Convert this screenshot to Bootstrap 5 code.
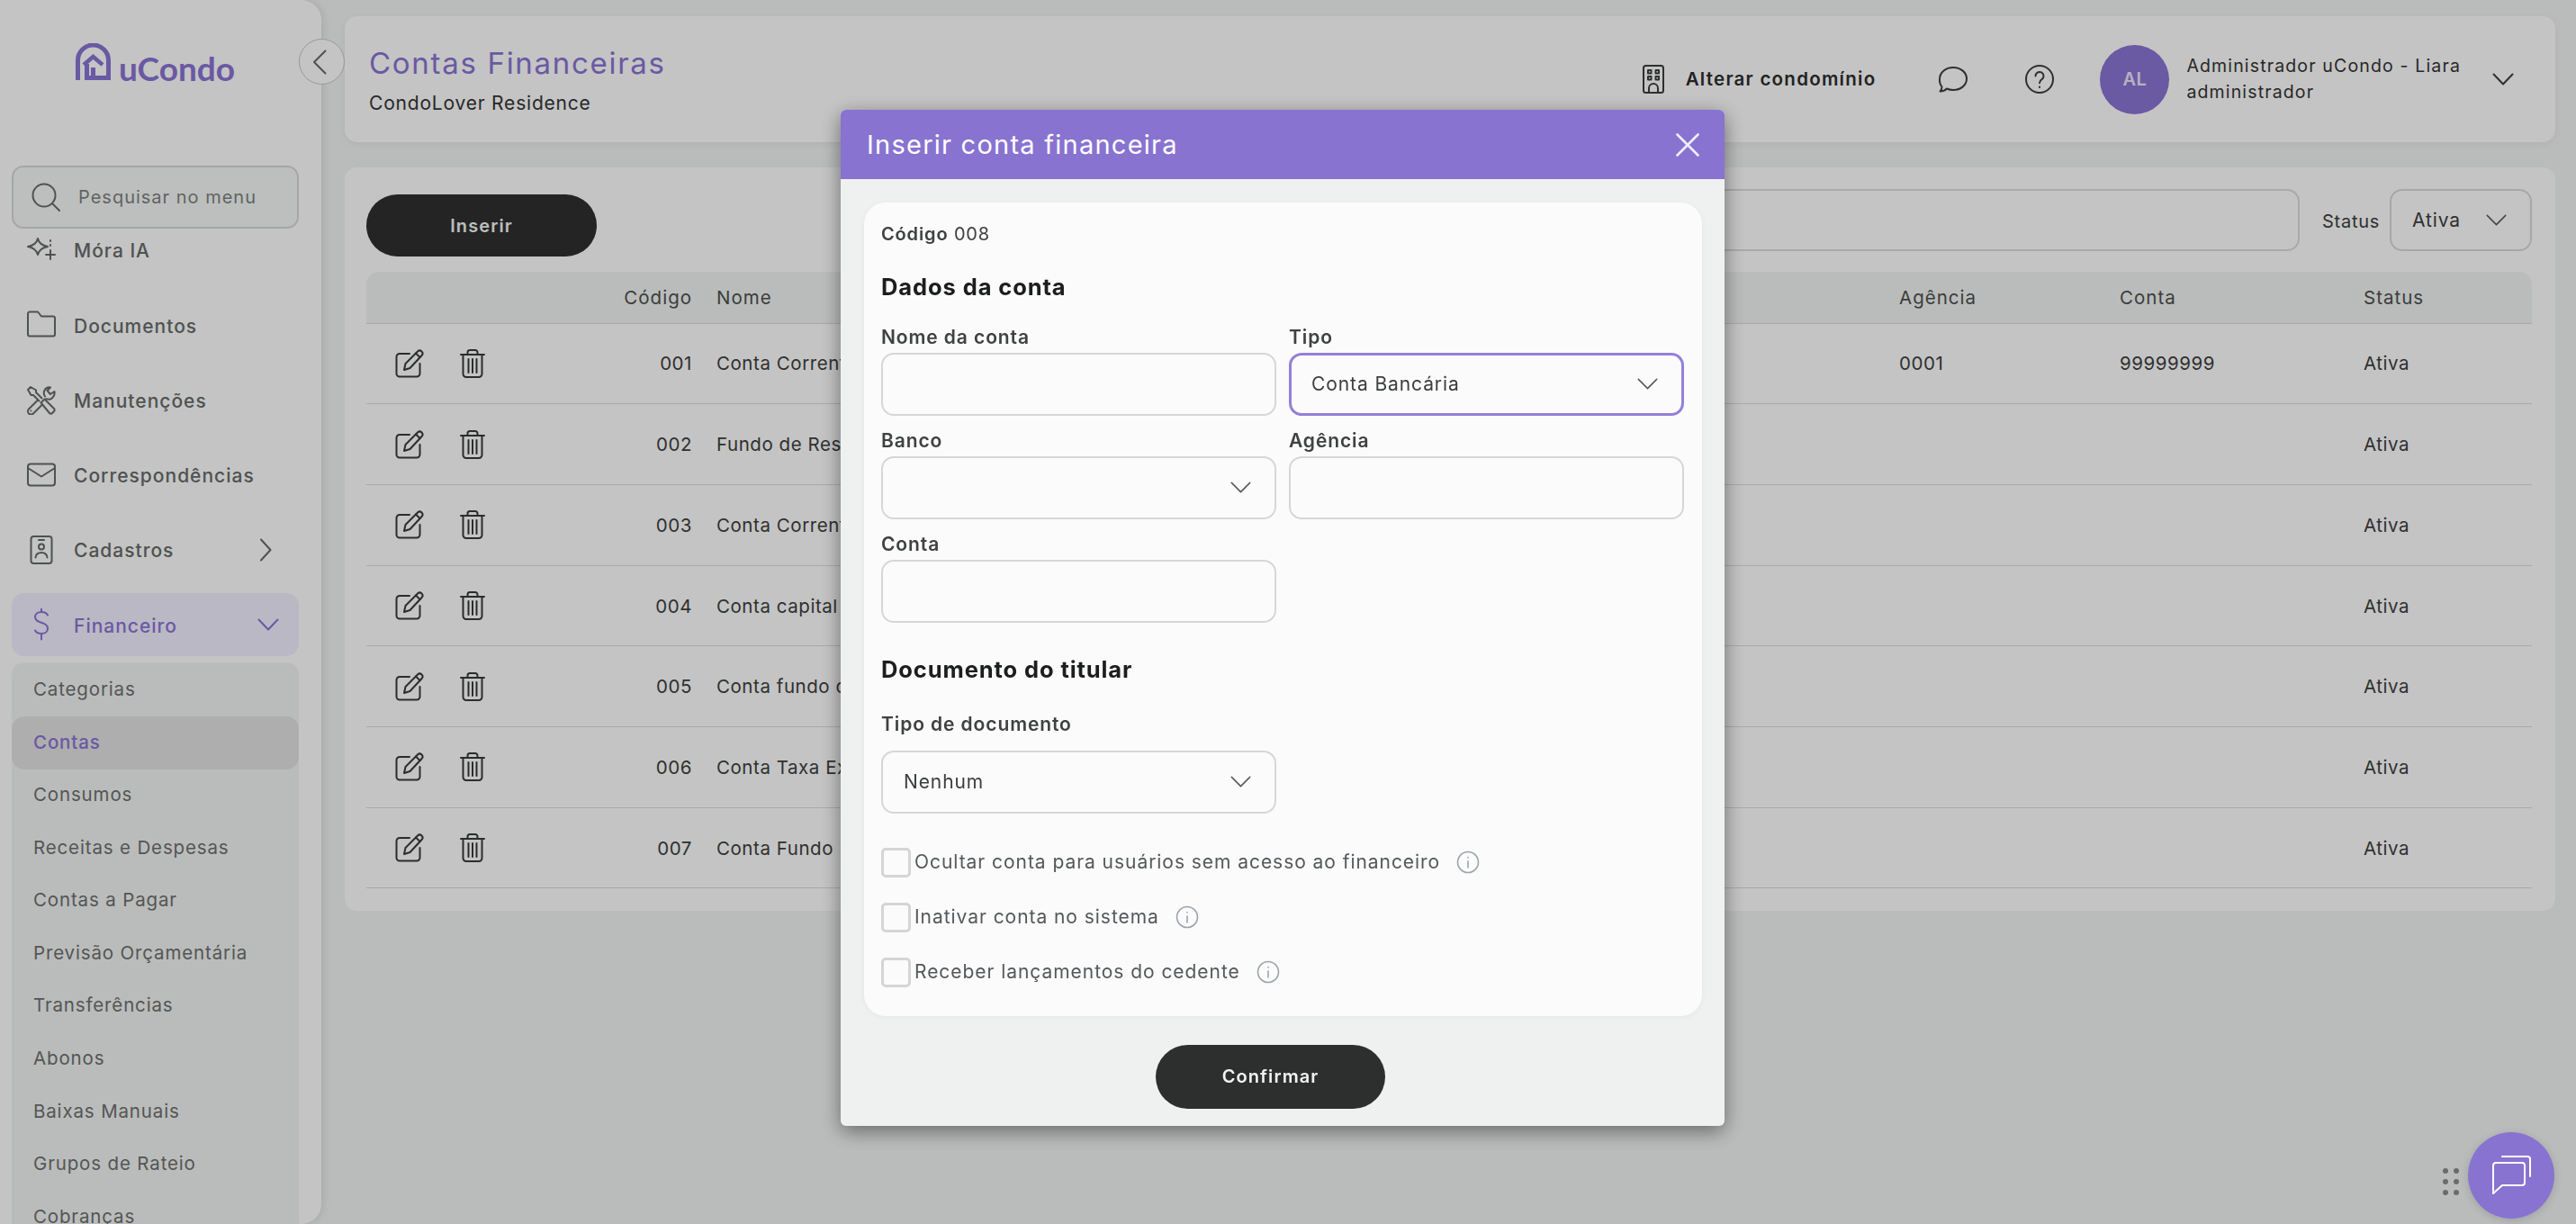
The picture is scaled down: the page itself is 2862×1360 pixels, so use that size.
<!doctype html>
<html lang="pt-BR">
<head>
<meta charset="UTF-8" />
<meta name="viewport" content="width=device-width, initial-scale=1.0" />
<title>Contas Financeiras - uCondo</title>
<link href="https://cdn.jsdelivr.net/npm/bootstrap@5.3.0/dist/css/bootstrap.min.css" rel="stylesheet" />
<style>
    :root { --roxo: #8873d1; --fundo: #eff1f0; --cartao: #fbfbfb; --escuro: #2d2f2e; }
    html, body { height: 100%; overflow: hidden; }
    body { font-family: Inter, "Liberation Sans", sans-serif; font-size: 20px; letter-spacing: .55px; background: var(--fundo); color: #3b3e3d; }
    .ico { fill: none; stroke: currentColor; stroke-width: 2; stroke-linecap: round; stroke-linejoin: round; flex: none; }

    /* menu lateral */
    .side-menu { width: 357px; height: 100vh; flex: none; background: var(--cartao); border-radius: 0 22px 22px 0; box-shadow: 2px 0 10px rgba(0,0,0,.1); position: relative; z-index: 2; }
    .side-scroll { height: 100%; overflow: hidden; border-radius: 0 22px 22px 0; }
    .side-logo { height: 184px; padding: 48px 0 0 84px; color: var(--roxo); }
    .side-logo span { font-family: Lato, sans-serif; font-weight: 700; font-size: 37px; letter-spacing: 0; line-height: 1; margin-left: 9px; margin-top: 9px; }
    .side-toggle { position: absolute; left: 332px; top: 43px; width: 51px; height: 51px; border-radius: 50%; background: var(--cartao); border: 1px solid #c4c4c4; color: #656968; padding: 0 6px 0 0; }
    .side-search { height: 70px; margin: 0 25px 0 13px; padding-left: 20px; background: #f3f5f4; border: 2px solid #d4d7d5; border-radius: 13px; position: relative; z-index: 1; color: #656968; }
    .side-search input { border: 0; background: transparent; outline: 0; width: 230px; margin-left: 18px; font-size: 20px; letter-spacing: 1px; color: #656968; }
    .side-search input::placeholder { color: #7c807e; opacity: 1; }
    .side-list { margin: -11px 25px 0 13px; padding: 0; list-style: none; }
    .side-item { height: 70px; margin-bottom: 13.3px; padding-left: 17px; padding-right: 22px; border-radius: 14px; color: #656968; font-size: 21px; font-weight: 500; letter-spacing: 1px; }
    .side-item .txt { margin-left: 20px; padding-top: 2px; flex-grow: 1; }
    .side-item.open { background: #efecfc; color: var(--roxo); margin-bottom: 7px; }
    .sub-list { background: var(--fundo); border-radius: 14px; padding: 1px 0 0; font-size: 20.5px; letter-spacing: .85px; color: #6c6e6d; margin-bottom: 0; list-style: none; }
    .sub-list li { height: 58.6px; padding: 0 0 1px 24px; display: flex; align-items: center; border-radius: 14px; }
    .sub-list li.active { background: #dfdfdf; color: var(--roxo); font-weight: 500; }

    /* area principal */
    .main-area { flex-grow: 1; min-width: 0; padding: 18px 23px 0 26px; }
    .top-card { height: 140px; background: var(--cartao); border-radius: 14px; padding: 0 46px 0 27px; margin-bottom: 28px; box-shadow: 0 2px 8px rgba(0,0,0,.06); }
    .top-title { color: var(--roxo); font-size: 33px; letter-spacing: 1.7px; line-height: 44px; margin-top: 1px; }
    .top-sub { font-size: 21px; letter-spacing: .8px; line-height: 30px; margin-top: 8px; color: #333; }
    .top-change { font-weight: 600; color: #2b2d2d; letter-spacing: 1.25px; font-size: 20.5px; }
    .top-avatar { width: 77px; height: 77px; border-radius: 50%; background: var(--roxo); color: #e8e4f6; font-weight: 600; }
    .top-user { font-size: 19.5px; line-height: 29px; margin-left: 19px; margin-right: 35px; color: #333; letter-spacing: 1.15px; }
    .list-card { height: 826px; background: var(--cartao); border-radius: 14px; padding: 24px 26px 0 24px; }
    .btn-dark-pill { background: var(--escuro); color: #f2f2f2; border: 0; border-radius: 36px; font-weight: 600; font-size: 20px; letter-spacing: 1.1px; }
    .btn-insert { width: 256px; height: 69px; margin-top: 6px; flex: none; }
    .filter-input.form-control { height: 69px; border: 2px solid #d9d9d9; border-radius: 14px; background: var(--cartao); margin-left: 340px; }
    .filter-label { width: 100px; padding-left: 25px; flex: none; font-size: 20px; letter-spacing: .75px; }
    .filter-select.form-select { width: 158px; flex: none; height: 69px; margin-left: 0; padding-left: 23px; }
    .form-select { background-image: url("data:image/svg+xml,%3csvg xmlns='http://www.w3.org/2000/svg' viewBox='0 0 24 14'%3e%3cpath fill='none' stroke='%23555' stroke-width='1.6' stroke-linecap='round' stroke-linejoin='round' d='M1 1.5l11 11 11-11'/%3e%3c/svg%3e"); background-size: 23px 13px; background-position: right 26px center; }

    .contas-table { table-layout: fixed; margin: 17px 0 0; width: 2406px; }
    .contas-table th, .contas-table td { padding: 2px 13.5px 0; vertical-align: middle; border-bottom: 1px solid #d9d9d9; background: transparent; color: #3b3e3d; font-weight: 400; font-size: 20.5px; box-shadow: none; }
    .contas-table thead tr { height: 57px; }
    .contas-table th { background: var(--fundo); color: #4c4f4e; letter-spacing: 1px; }
    .contas-table th:first-child { border-top-left-radius: 14px; }
    .contas-table th:last-child { border-top-right-radius: 14px; }
    .contas-table tbody tr { height: 89.7px; }
    .contas-table td.acoes { padding-left: 32px; color: #373a39; }
    .contas-table td.acoes > div { margin-top: -2px; gap: 40px; }

    /* modal */
    .modal { --bs-modal-width: 982px; }
    .modal-backdrop { --bs-backdrop-opacity: .22; }
    .modal-dialog { margin: 122px 0 0 934px; }
    .modal-content { border: 0; border-radius: 6px; background: var(--fundo); box-shadow: 0 6px 22px rgba(0,0,0,.45); }
    .modal-header { height: 77px; padding: 0 28px 0 29px; background: var(--roxo); color: #fff; border: 0; border-radius: 6px 6px 0 0; }
    .modal-title { font-size: 29px; font-weight: 400; letter-spacing: 1.25px; color: #fff; }
    .modal-body { padding: 26px 25px 19px 26px; }
    .form-box { background: var(--cartao); border-radius: 24px; padding: 20px 20px 32px 19px; box-shadow: 0 1px 6px rgba(0,0,0,.05); }
    .form-code { line-height: 30px; color: #3f4241; letter-spacing: .85px; }
    .form-code b { font-weight: 600; }
    .form-head { font-size: 25.5px; font-weight: 700; color: #1c1e1d; line-height: 36px; letter-spacing: .9px; margin: 26px 0 0; }
    .form-grid { display: grid; grid-template-columns: 1fr 1fr; column-gap: 14px; row-gap: 14.5px; margin-top: 24px; }
    .form-label { font-size: 21px; font-weight: 600; color: #3f4241; line-height: 28px; margin: 0 0 2.5px; letter-spacing: .9px; display: block; }
    .form-control, .form-select { height: 70px; border: 2px solid #d5d7d6; border-radius: 14px; background-color: var(--cartao); color: #3b3e3d; font-size: 21px; letter-spacing: .9px; }
    .form-select { padding-left: 23px; }
    .form-select.tipo-foco { border: 3px solid #9380da; padding-left: 22px; }
    .doc-col { width: 439px; }
    .check-row { height: 33px; margin-bottom: 28px; color: #55585a; font-size: 21px; letter-spacing: .95px; }
    .check-row:last-child { margin-bottom: 0; }
    .check-row .form-check-input { width: 33px; height: 33px; margin: 0; border: 3px solid #d3d6d4; border-radius: 5px; background-color: var(--cartao); flex: none; }
    .check-row label { margin-left: 4px; }
    .check-row .ico { color: #9aa5ae; margin-left: 18px; stroke-width: 1.6; }
    .btn-confirm { display: block; width: 255px; height: 71px; margin: 32px 0 0 324px; }

    /* chat flutuante */
    .chat-float { position: fixed; right: 24px; bottom: 6px; z-index: 1060; }
    .chat-dots { display: grid; grid-template-columns: 6px 6px; gap: 6px; margin-right: 10px; margin-top: 14px; }
    .chat-dots i { width: 6px; height: 6px; border-radius: 50%; background: #6b6b6b; }
    .chat-btn { width: 96px; height: 96px; border-radius: 50%; border: 0; background: var(--roxo); color: #fff; padding: 0; box-shadow: 0 2px 10px rgba(0,0,0,.15); }
</style>
</head>
<body>
<svg width="0" height="0" class="position-absolute">
    <symbol id="i-edit" viewBox="0 0 32 32"><path d="M16 5H5a3.500 3.500 0 0 0-3.500 3.500V27A3.500 3.500 0 0 0 5 30.500h19a3.500 3.500 0 0 0 3.500-3.500V16"/><path d="M10 23l1.500-7L25 2.500a3.200 3.200 0 0 1 4.500 0 3.200 3.200 0 0 1 0 4.500L16.500 21z"/><path d="M23 4.500L27.500 9"/></symbol>
    <symbol id="i-trash" viewBox="0 0 28 32"><path d="M1 6h26"/><path d="M3.500 6v21.500a3.500 3.500 0 0 0 3.500 3.500h14a3.500 3.500 0 0 0 3.500-3.500V6"/><path d="M8.500 6V3.500A2.500 2.500 0 0 1 11 1h6a2.500 2.500 0 0 1 2.500 2.500V6"/><path d="M9.500 11v15M14 11v15M18.500 11v15"/></symbol>
    <symbol id="i-info" viewBox="0 0 26 26"><circle cx="13" cy="13" r="11.500"/><path d="M13 12v7M13 7.500v.5"/></symbol>
</svg>

<div class="d-flex">
    <aside class="side-menu">
        <button class="side-toggle d-flex align-items-center justify-content-center" aria-label="Recolher menu">
            <svg class="ico" width="16" height="28" viewBox="0 0 16 28"><path d="M14.500 1.500L2 14l12.500 12.500"/></svg>
        </button>
        <div class="side-scroll">
            <div class="side-logo d-flex align-items-start">
                <svg width="39" height="41" viewBox="0 0 39 41" fill="none" stroke="currentColor" stroke-width="5"><path d="M2.500 41V19a17 17 0 0 1 34 0v19.500H19.500V27"/><path d="M9 24l10.500-9 10.500 9" stroke-width="4.500"/><path d="M18 38.500h-5.500V23"/></svg>
                <span>uCondo</span>
            </div>
            <div class="side-search d-flex align-items-center">
                <svg class="ico" width="32" height="32" viewBox="0 0 32 32"><circle cx="14" cy="14" r="12.500"/><path d="M23 23l8 8"/></svg>
                <input type="text" placeholder="Pesquisar no menu" />
            </div>
            <ul class="side-list">
                <li class="side-item d-flex align-items-center">
                    <svg class="ico" width="32" height="32" viewBox="0 0 32 32"><path d="M12 4.500c1 4.500 3.500 7.500 11 9-7.500 1.500-10 4.500-11 9-1-4.500-3.500-7.500-11-9 7.500-1.500 10-4.500 11-9z" transform="translate(0 -1.500)"/><path d="M26 16v10M21 21h10M26 5v1M26 10v1"/></svg>
                    <span class="txt">Móra IA</span>
                </li>
                <li class="side-item d-flex align-items-center">
                    <svg class="ico" width="32" height="32" viewBox="0 0 32 32"><path d="M1 3.500A2 2 0 0 1 3 1.500h9l4 5h13a2 2 0 0 1 2 2v18a2 2 0 0 1-2 2H3a2 2 0 0 1-2-2z"/></svg>
                    <span class="txt">Documentos</span>
                </li>
                <li class="side-item d-flex align-items-center">
                    <svg class="ico" width="32" height="32" viewBox="0 0 32 32"><path d="M16.500 13.500L10 7V4.500L4 1 1 4l3.500 6H7l6.500 6.500"/><path d="M15.500 18.500l4-4L30 25a2 2 0 0 1 0 3l-2 2a2 2 0 0 1-3 0z"/><path d="M12 15.500L2 25.500a3.500 3.500 0 0 0 5 5l10-10"/><path d="M4.500 27.500v.1"/><path d="M20 11.500c-3-4.500 0-11 6-10l-3.500 3.500 3.500 4 4.500-3c1 6-4.500 10.500-9 8"/></svg>
                    <span class="txt">Manutenções</span>
                </li>
                <li class="side-item d-flex align-items-center">
                    <svg class="ico" width="32" height="32" viewBox="0 0 32 32"><rect x="1" y="3.500" width="30" height="24" rx="3"/><path d="M1 8l15 9.500L31 8"/></svg>
                    <span class="txt">Correspondências</span>
                </li>
                <li class="side-item d-flex align-items-center">
                    <svg class="ico" width="32" height="32" viewBox="0 0 32 32"><rect x="4.500" y="1" width="23" height="30" rx="3"/><path d="M13 5h6"/><circle cx="16" cy="12.500" r="3"/><path d="M9.500 24.500c.5-4 3-5.500 6.500-5.500s6 1.500 6.500 5.500"/></svg>
                    <span class="txt">Cadastros</span>
                    <svg class="ico me-2" width="14" height="26" viewBox="0 0 14 26"><path d="M2 1.500L12.500 13 2 24.500"/></svg>
                </li>
                <li class="side-item open d-flex align-items-center">
                    <svg class="ico" width="32" height="36" viewBox="0 0 32 36"><path d="M23 8c-1-2-3.500-3.500-7-3.500-4 0-7 2-7 5.500 0 8 14 4.500 14 13 0 3.500-3 5.500-7 5.500-3.500 0-6-1.500-7-3.500M16 1v3.500M16 29v6" transform="translate(0 -.5)"/></svg>
                    <span class="txt">Financeiro</span>
                    <svg class="ico" width="24" height="14" viewBox="0 0 24 14"><path d="M1.500 1.500L12 12.500 22.500 1.500"/></svg>
                </li>
                <li>
                    <ul class="sub-list">
                        <li>Categorias</li>
                        <li class="active">Contas</li>
                        <li>Consumos</li>
                        <li>Receitas e Despesas</li>
                        <li>Contas a Pagar</li>
                        <li>Previsão Orçamentária</li>
                        <li>Transferências</li>
                        <li>Abonos</li>
                        <li>Baixas Manuais</li>
                        <li>Grupos de Rateio</li>
                        <li>Cobranças</li>
                    </ul>
                </li>
            </ul>
        </div>
    </aside>

    <main class="main-area">
        <header class="top-card d-flex justify-content-between align-items-center">
            <div>
                <div class="top-title">Contas Financeiras</div>
                <div class="top-sub">CondoLover Residence</div>
            </div>
            <div class="d-flex align-items-center">
                <svg class="ico" width="24" height="32" viewBox="0 0 24 32"><rect x="1" y="1" width="22" height="30" rx="2.500"/><rect x="6" y="6" width="3.500" height="3.500"/><rect x="14.500" y="6" width="3.500" height="3.500"/><rect x="6" y="13" width="3.500" height="3.500"/><rect x="14.500" y="13" width="3.500" height="3.500"/><path d="M7 31v-5a5 5 0 0 1 10 0v5"/></svg>
                <span class="top-change ms-4">Alterar condomínio</span>
                <svg class="ico" style="margin-left:70px" width="32" height="30" viewBox="0 0 32 30"><path d="M1.500 28.500c1.500-1.500 2-3 2-5A12 12 0 0 1 1 15C1 7.500 7.500 2 16 2s15 5.500 15 12.500S24.500 27 16 27c-2.500 0-5-.5-7-1.500-2 2-4.500 3-7.500 3z"/></svg>
                <svg class="ico" style="margin-left:64px" width="32" height="32" viewBox="0 0 32 32"><circle cx="16" cy="16" r="15"/><path d="M11.500 12.500a4.500 4.500 0 1 1 7 3.700c-1.500 1-2.500 2-2.500 4M16 24.500v.5"/></svg>
                <div class="top-avatar d-flex align-items-center justify-content-center" style="margin-left:51px">AL</div>
                <div class="top-user">
                    <div>Administrador uCondo - Liara</div>
                    <div>administrador</div>
                </div>
                <svg class="ico" width="24" height="14" viewBox="0 0 24 14"><path d="M1.500 1.500L12 12.500 22.500 1.500"/></svg>
            </div>
        </header>

        <section class="list-card">
            <div class="d-flex align-items-start">
                <button class="btn-dark-pill btn-insert">Inserir</button>
                <input class="filter-input form-control" type="text" />
                <span class="filter-label align-self-center mb-1">Status</span>
                <select class="filter-select form-select"><option>Ativa</option></select>
            </div>
            <table class="table contas-table">
                <colgroup>
                    <col style="width:193px" /><col style="width:182.5px" /><col style="width:1314px" /><col style="width:245px" /><col style="width:271px" /><col />
                </colgroup>
                <thead>
                    <tr><th></th><th class="text-end">Código</th><th>Nome</th><th>Agência</th><th>Conta</th><th>Status</th></tr>
                </thead>
                <tbody>
                    <tr>
                        <td class="acoes"><div class="d-flex"><svg class="ico" width="32" height="32"><use href="#i-edit" /></svg><svg class="ico" width="28" height="32"><use href="#i-trash" /></svg></div></td>
                        <td class="text-end">001</td><td>Conta Corrente</td><td>0001</td><td>99999999</td><td>Ativa</td>
                    </tr>
                    <tr>
                        <td class="acoes"><div class="d-flex"><svg class="ico" width="32" height="32"><use href="#i-edit" /></svg><svg class="ico" width="28" height="32"><use href="#i-trash" /></svg></div></td>
                        <td class="text-end">002</td><td>Fundo de Reserva</td><td></td><td></td><td>Ativa</td>
                    </tr>
                    <tr>
                        <td class="acoes"><div class="d-flex"><svg class="ico" width="32" height="32"><use href="#i-edit" /></svg><svg class="ico" width="28" height="32"><use href="#i-trash" /></svg></div></td>
                        <td class="text-end">003</td><td>Conta Corrente</td><td></td><td></td><td>Ativa</td>
                    </tr>
                    <tr>
                        <td class="acoes"><div class="d-flex"><svg class="ico" width="32" height="32"><use href="#i-edit" /></svg><svg class="ico" width="28" height="32"><use href="#i-trash" /></svg></div></td>
                        <td class="text-end">004</td><td>Conta capital</td><td></td><td></td><td>Ativa</td>
                    </tr>
                    <tr>
                        <td class="acoes"><div class="d-flex"><svg class="ico" width="32" height="32"><use href="#i-edit" /></svg><svg class="ico" width="28" height="32"><use href="#i-trash" /></svg></div></td>
                        <td class="text-end">005</td><td>Conta fundo de obras</td><td></td><td></td><td>Ativa</td>
                    </tr>
                    <tr>
                        <td class="acoes"><div class="d-flex"><svg class="ico" width="32" height="32"><use href="#i-edit" /></svg><svg class="ico" width="28" height="32"><use href="#i-trash" /></svg></div></td>
                        <td class="text-end">006</td><td>Conta Taxa Extra</td><td></td><td></td><td>Ativa</td>
                    </tr>
                    <tr>
                        <td class="acoes"><div class="d-flex"><svg class="ico" width="32" height="32"><use href="#i-edit" /></svg><svg class="ico" width="28" height="32"><use href="#i-trash" /></svg></div></td>
                        <td class="text-end">007</td><td>Conta Fundo</td><td></td><td></td><td>Ativa</td>
                    </tr>
                </tbody>
            </table>
        </section>
    </main>
</div>

<div class="modal-backdrop show"></div>
<div class="modal d-block" tabindex="-1">
    <div class="modal-dialog">
        <div class="modal-content">
            <div class="modal-header d-flex justify-content-between align-items-center">
                <div class="modal-title">Inserir conta financeira</div>
                <svg width="26" height="26" viewBox="0 0 26 26" fill="none" stroke="#f0edfa" stroke-width="2.600" stroke-linecap="round"><path d="M1.500 1.500l23 23M24.500 1.500l-23 23"/></svg>
            </div>
            <div class="modal-body">
                <form class="form-box">
                    <div class="form-code"><b>Código</b> 008</div>
                    <h5 class="form-head">Dados da conta</h5>
                    <div class="form-grid">
                        <div>
                            <label class="form-label">Nome da conta</label>
                            <input class="form-control" type="text" />
                        </div>
                        <div>
                            <label class="form-label">Tipo</label>
                            <select class="form-select tipo-foco"><option>Conta Bancária</option></select>
                        </div>
                        <div>
                            <label class="form-label">Banco</label>
                            <select class="form-select"><option></option></select>
                        </div>
                        <div>
                            <label class="form-label">Agência</label>
                            <input class="form-control" type="text" />
                        </div>
                        <div>
                            <label class="form-label">Conta</label>
                            <input class="form-control" type="text" />
                        </div>
                    </div>
                    <h5 class="form-head" style="margin-top:34px">Documento do titular</h5>
                    <div class="doc-col" style="margin-top:29px">
                        <label class="form-label" style="margin-bottom:15px">Tipo de documento</label>
                        <select class="form-select"><option>Nenhum</option></select>
                    </div>
                    <div style="margin-top:38px">
                        <div class="check-row d-flex align-items-center">
                            <input class="form-check-input" type="checkbox" id="chk1" />
                            <label for="chk1">Ocultar conta para usuários sem acesso ao financeiro</label>
                            <svg class="ico" width="26" height="26"><use href="#i-info" /></svg>
                        </div>
                        <div class="check-row d-flex align-items-center">
                            <input class="form-check-input" type="checkbox" id="chk2" />
                            <label for="chk2">Inativar conta no sistema</label>
                            <svg class="ico" width="26" height="26"><use href="#i-info" /></svg>
                        </div>
                        <div class="check-row d-flex align-items-center">
                            <input class="form-check-input" type="checkbox" id="chk3" />
                            <label for="chk3">Receber lançamentos do cedente</label>
                            <svg class="ico" width="26" height="26"><use href="#i-info" /></svg>
                        </div>
                    </div>
                </form>
                <button class="btn-dark-pill btn-confirm">Confirmar</button>
            </div>
        </div>
    </div>
</div>

<div class="chat-float d-flex align-items-center">
    <div class="chat-dots"><i></i><i></i><i></i><i></i><i></i><i></i></div>
    <button class="chat-btn d-flex align-items-center justify-content-center" aria-label="Chat">
        <svg class="ico" width="48" height="48" viewBox="0 0 48 48" stroke-width="2.500"><path d="M4 13a3 3 0 0 1 3-3h29a3 3 0 0 1 3 3v19a3 3 0 0 1-3 3H14L4 44z"/><path d="M14 3h28a3 3 0 0 1 3 3v19"/></svg>
    </button>
</div>

<script src="https://cdn.jsdelivr.net/npm/bootstrap@5.3.0/dist/js/bootstrap.bundle.min.js"></script>
</body>
</html>
